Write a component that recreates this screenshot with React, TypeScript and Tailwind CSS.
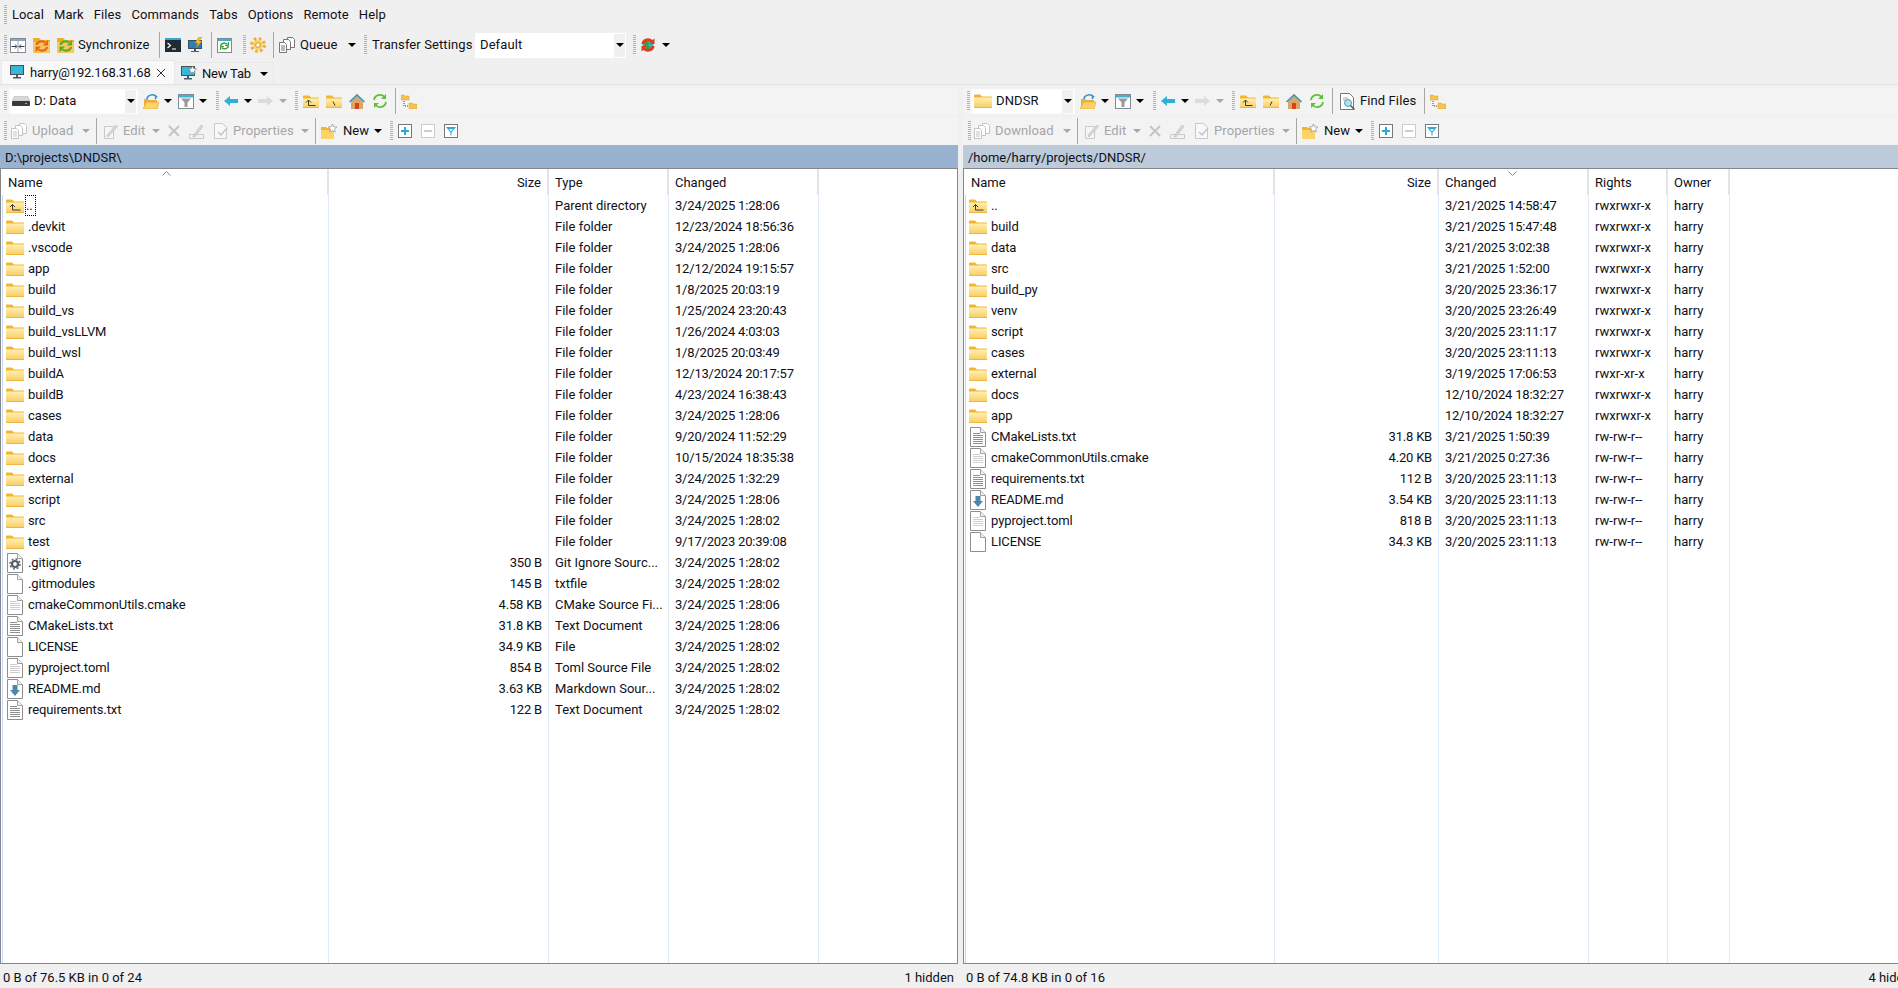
import type { ReactNode } from "react";

const text = "text-[#101018]";

function Grip({ className = "" }: { className?: string }) {
  return (
    <span
      className={`block w-[3px] h-[20px] shrink-0 bg-[repeating-linear-gradient(to_bottom,#b2b2b2_0_1px,transparent_1px_2px)] ${className}`}
    />
  );
}

function Sep({ className = "" }: { className?: string }) {
  return <span className={`block w-px h-[26px] shrink-0 bg-[#a6a6a6] ${className}`} />;
}

function Caret({ className = "", off = false }: { className?: string; off?: boolean }) {
  return (
    <span
      className={`block w-0 h-0 shrink-0 border-x-[4px] border-x-transparent border-t-[4px] ${
        off ? "border-t-[#a8a8a8]" : "border-t-black"
      } ${className}`}
    />
  );
}

function Label({ className = "", off = false, tight = false, children }: { className?: string; off?: boolean; tight?: boolean; children: ReactNode }) {
  return (
    <span
      className={`block shrink-0 whitespace-nowrap ${tight ? "tracking-[-0.2px]" : "tracking-[0.1px]"} ${
        off ? "text-[#a6a6a6]" : text
      } ${className}`}
    >
      {children}
    </span>
  );
}

function Ico({ w = 16, h = 16, className = "", children }: { w?: number; h?: number; className?: string; children: ReactNode }) {
  return (
    <svg width={w} height={h} viewBox={`0 0 ${w} ${h}`} className={`block shrink-0 ${className}`}>
      {children}
    </svg>
  );
}

function FolderShape({ w = 18, h = 14 }: { w?: number; h?: number }) {
  return (
    <>
      <defs>
        <linearGradient id="fbody" x1="0" y1="0" x2="0" y2="1">
          <stop offset="0" stopColor="#fff0b4" />
          <stop offset="1" stopColor="#f9cc5f" />
        </linearGradient>
      </defs>
      <path d={`M0 1.5a1 1 0 0 1 1-1h5l2 2h${w - 9}a1 1 0 0 1 1 1V${h}H0z`} fill="#f3b52f" />
      <rect x="0" y="3.5" width={w} height={h - 3.5} fill="url(#fbody)" />
      <rect x="0" y={h - 1} width={w} height="1" fill="#eeb540" />
    </>
  );
}

function Folder({ className = "" }: { className?: string }) {
  return (
    <Ico w={18} h={14} className={className}>
      <FolderShape />
    </Ico>
  );
}

function UpFolder({ className = "" }: { className?: string }) {
  return (
    <Ico w={16} h={13} className={className}>
      <FolderShape w={16} h={13} />
      <path d="M3 7.500l2.500-2.500 2.500 2.500M5.500 5v5.500h7" fill="none" stroke="#3c3c28" strokeWidth="1" />
    </Ico>
  );
}

function RootFolder({ className = "", slash }: { className?: string; slash: string }) {
  return (
    <Ico w={16} h={13} className={className}>
      <FolderShape w={16} h={13} />
      <path d={slash} fill="none" stroke="#3c3c28" strokeWidth="1" />
    </Ico>
  );
}

function Doc({ lines = 0, light = false, h = 20 }: { lines?: number; light?: boolean; h?: number }) {
  const ys = Array.from({ length: lines }, (_, i) => 6.5 + i * 2);
  return (
    <Ico w={16} h={h}>
      <path d={`M.5.5h10l5 5v${h - 6}H.5z`} fill="#fff" stroke="#8e8e8e" />
      <path d="M10.5.5v5h5" fill="#f1f1f1" stroke="#a0a0a0" />
      {ys.map((y, i) => (
        <path key={y} d={`M3 ${y}h${i === 0 ? 7 : 10}`} stroke={light ? "#cfcfcf" : "#8f8f8f"} strokeWidth="1" />
      ))}
    </Ico>
  );
}

function GearDoc() {
  return (
    <Ico w={16} h={20}>
      <path d="M.5.5h10l5 5v14H.5z" fill="#fff" stroke="#8e8e8e" />
      <path d="M10.5.5v5h5" fill="#f1f1f1" stroke="#a0a0a0" />
      <circle cx="8" cy="11" r="3" fill="none" stroke="#56606a" strokeWidth="2.2" />
      <circle cx="8" cy="11" r="5" fill="none" stroke="#56606a" strokeWidth="1.4" strokeDasharray="2 1.9" />
    </Ico>
  );
}

function MdDoc() {
  return (
    <Ico w={16} h={20}>
      <path d="M.5.5h10l5 5v14H.5z" fill="#fff" stroke="#8e8e8e" />
      <path d="M10.5.5v5h5" fill="#f1f1f1" stroke="#a0a0a0" />
      <path d="M5.500 6h5v5H13l-5 6-5-6h2.500z" fill="#4f87ab" />
    </Ico>
  );
}

type Kind = "up" | "folder" | "text" | "light" | "plain" | "gear" | "md";

function RowIcon({ kind }: { kind: Kind }) {
  if (kind === "up")
    return (
      <Ico w={18} h={14}>
        <FolderShape />
        <path d="M4 8l2.500-2.500L9 8M6.500 5.500V11h8" fill="none" stroke="#3c3c28" strokeWidth="1" />
      </Ico>
    );
  if (kind === "folder") return <Folder />;
  if (kind === "text") return <Doc lines={6} />;
  if (kind === "light") return <Doc lines={5} light />;
  if (kind === "gear") return <GearDoc />;
  if (kind === "md") return <MdDoc />;
  return <Doc />;
}

function SyncFolder({ tone, className = "" }: { tone: string; className?: string }) {
  return (
    <Ico w={17} h={16} className={className}>
      <path d="M0 1.500h6l2 2h9V16H0z" fill="#f8c95a" />
      <path d="M0 1h6l2 2h9v2H0z" fill="#eeac2c" />
      <path d="M3.500 8a5 4 0 0 1 8.500-2.500" fill="none" stroke={tone} strokeWidth="2.200" />
      <path d="M15 3v5.500H9.500z" fill={tone} />
      <path d="M14 10a5 4 0 0 1-8.500 2.500" fill="none" stroke={tone} strokeWidth="2.200" />
      <path d="M2.500 15.500V9.500h5.500z" fill={tone} />
    </Ico>
  );
}

function CompareIcon({ className = "" }: { className?: string }) {
  return (
    <Ico w={16} h={15} className={className}>
      <rect x=".5" y=".5" width="15" height="14" fill="#fff" stroke="#7f8b96" />
      <rect x="1" y="1" width="14" height="2" fill="#8fa5b8" />
      <path d="M8 3v11" stroke="#9aa5ae" />
      <path d="M1.500 8.500h5M5 6.500l2 2-2 2M14.500 8.500h-5M11 6.500l-2 2 2 2" stroke="#303c48" strokeWidth="1" fill="none" />
    </Ico>
  );
}

function TerminalIcon({ className = "" }: { className?: string }) {
  return (
    <Ico w={16} h={14} className={className}>
      <rect width="16" height="14" fill="#1f2a33" />
      <rect width="16" height="2" fill="#33a6d6" />
      <path d="M2.500 5l3 2.500-3 2.500" stroke="#fff" strokeWidth="1.200" fill="none" />
      <path d="M7 11h4" stroke="#fff" />
    </Ico>
  );
}

function MonitorBolt({ className = "" }: { className?: string }) {
  return (
    <Ico w={16} h={16} className={className}>
      <rect x=".5" y="3.500" width="13" height="8" fill="#2d7fb5" stroke="#3b4d5c" />
      <path d="M6 12h2v2h3v1H3v-1h3z" fill="#4a5a66" />
      <path d="M11 0l-4 6h3l-2 5 6-7h-3l3-4z" fill="#f4c430" stroke="#b98b10" strokeWidth=".5" />
    </Ico>
  );
}

function RefreshWindow({ className = "" }: { className?: string }) {
  return (
    <Ico w={15} h={15} className={className}>
      <rect x=".5" y=".5" width="14" height="14" fill="#fff" stroke="#7f8b96" />
      <rect x="1" y="1" width="13" height="2" fill="#3fb1c9" />
      <path d="M3.500 8a4 3.500 0 0 1 7-1.500M11.500 8a4 3.500 0 0 1-7 1.500" fill="none" stroke="#3b9d35" strokeWidth="1.500" />
      <path d="M11.500 4v3.500H8M3.500 12V8.500H7" fill="none" stroke="#3b9d35" strokeWidth="1" />
    </Ico>
  );
}

function Gear({ className = "" }: { className?: string }) {
  return (
    <Ico w={16} h={16} className={className}>
      <circle cx="8" cy="8" r="6.200" fill="none" stroke="#eeb02f" strokeWidth="3.400" strokeDasharray="2.600 2.270" />
      <circle cx="8" cy="8" r="5" fill="#fbd469" />
      <circle cx="8" cy="8" r="2.400" fill="#f4f4f4" stroke="#d9951f" />
    </Ico>
  );
}

function Stack({ off = false, className = "" }: { off?: boolean; className?: string }) {
  const s = off ? "#c4c4c4" : "#777";
  return (
    <Ico w={16} h={16} className={className}>
      <path d="M8.500.5h5l2 2v8h-7z" fill="#fff" stroke={s} />
      <path d="M4.500 2.500h5l2 2v8h-7z" fill="#fff" stroke={s} />
      <path d="M.5 5.500h5l2 2v8h-7z" fill="#fff" stroke={s} />
      <path d="M2 9h4M2 11h4M2 13h4" stroke={s} />
    </Ico>
  );
}

function GlobeSync({ className = "" }: { className?: string }) {
  return (
    <Ico w={16} h={16} className={className}>
      <circle cx="8" cy="8" r="5.500" fill="#39b3c6" />
      <path d="M5 4l4 1-1 3 2 2-2 3-2-3-2-1z" fill="#3f9b3c" />
      <path d="M1.500 7a6.500 6 0 0 1 11-4l2-1.500V7H9l2-1.800a4 4 0 0 0-6.500 1.800z" fill="#d9401a" />
      <path d="M14.500 9a6.500 6 0 0 1-11 4l-2 1.500V9H7L5 10.800a4 4 0 0 0 6.500-1.800z" fill="#d9401a" />
    </Ico>
  );
}

function MonitorIcon({ star = false, className = "" }: { star?: boolean; className?: string }) {
  return (
    <Ico w={16} h={15} className={className}>
      <rect x=".5" y=".5" width="13" height="9" fill="#38b6d8" stroke="#45525c" />
      <path d="M6 10h2v2h3v1.500H3V12h3z" fill="#4a5a66" />
      {star && <path d="M11.500 0l1.200 2.600 2.800.3-2 1.900.5 2.800-2.500-1.400L9 7.600l.5-2.800-2-1.900 2.800-.3z" fill="#fff" stroke="#7a7a7a" strokeWidth=".7" />}
    </Ico>
  );
}

function DriveIcon() {
  return (
    <Ico w={18} h={10}>
      <path d="M2.500 0h13L18 5H0z" fill="#d8d8d8" stroke="#b0b0b0" strokeWidth=".5" />
      <rect x="0" y="5" width="18" height="5" rx="1" fill="#3a3a3a" />
      <rect x="13" y="7" width="2" height="1" fill="#8fd14f" />
    </Ico>
  );
}

function OpenFolder({ className = "" }: { className?: string }) {
  return (
    <Ico w={16} h={15} className={className}>
      <path d="M1 5h4l1 1h8v8H1z" fill="#eeb03a" />
      <path d="M3.500 8H16l-2 7H0z" fill="#fbd36a" stroke="#e5a52d" strokeWidth=".6" />
      <path d="M4 5a5 4 0 0 1 9-2.500M11 1l2.500 1.500L12 5" fill="none" stroke="#2c8fd0" strokeWidth="1.500" />
    </Ico>
  );
}

function FilterIcon({ className = "" }: { className?: string }) {
  return (
    <Ico w={16} h={15} className={className}>
      <rect x=".5" y=".5" width="15" height="14" fill="#fff" stroke="#7f8b96" />
      <rect x="1" y="1" width="14" height="2.500" fill="#3fb1d6" />
      <path d="M3 4.500h10L9.500 8.500V13h-3V8.500z" fill="#9a9a9a" />
    </Ico>
  );
}

function BackArrow({ className = "" }: { className?: string }) {
  return (
    <Ico w={14} h={10} className={className}>
      <path d="M0 5l6-5v3h8v4H6v3z" fill="#2fb0d8" />
    </Ico>
  );
}

function ForwardArrow({ className = "" }: { className?: string }) {
  return (
    <Ico w={15} h={10} className={className}>
      <path d="M15 5L9 0v3H0v4h9v3z" fill="#dcdcdc" />
    </Ico>
  );
}

function Home({ className = "" }: { className?: string }) {
  return (
    <Ico w={16} h={15} className={className}>
      <path d="M8 0L0 7.500h2V15h12V7.500h2z" fill="#d9a869" />
      <path d="M8 0L0 7.500l1 1L8 2l7 6.500 1-1z" fill="#2f9cd0" />
      <rect x="6" y="9" width="4" height="6" fill="#d9421b" />
    </Ico>
  );
}

function RefreshIcon({ className = "" }: { className?: string }) {
  return (
    <Ico w={16} h={16} className={className}>
      <path d="M2 7a6 6 0 0 1 10.500-3M14 9a6 6 0 0 1-10.500 3" fill="none" stroke="#5fc13a" strokeWidth="1.800" />
      <path d="M14 1v5H9zM2 15v-5h5z" fill="#5fc13a" />
    </Ico>
  );
}

function TreeIcon({ className = "" }: { className?: string }) {
  return (
    <Ico w={16} h={15} className={className}>
      <path d="M0 1h3l1 1h4v4H0zM8 9h3l1 1h4v5H8z" fill="#f5c44f" stroke="#dca32b" strokeWidth=".5" />
      <path d="M3 7v5h4" stroke="#444" strokeDasharray="1 1" fill="none" />
    </Ico>
  );
}

function FindIcon({ className = "" }: { className?: string }) {
  return (
    <Ico w={16} h={17} className={className}>
      <path d="M.5.5h9l4 4v12H.5z" fill="#fff" stroke="#777" />
      <path d="M3 5h5M3 7h4" stroke="#aaa" />
      <circle cx="8" cy="10" r="3.500" fill="#aee0ee" stroke="#5a9db5" />
      <path d="M10.500 12.500l4 4" stroke="#555" strokeWidth="1.500" />
    </Ico>
  );
}

function EditIcon({ className = "" }: { className?: string }) {
  return (
    <Ico w={14} h={15} className={className}>
      <path d="M.5 2.500h9v12h-9z" fill="#f6f6f6" stroke="#c9c9c9" />
      <path d="M3 11l9-10 1.500 1.500-9 10H3z" fill="#d6d6d6" stroke="#bdbdbd" strokeWidth=".6" />
    </Ico>
  );
}

function RenameIcon({ className = "" }: { className?: string }) {
  return (
    <Ico w={15} h={15} className={className}>
      <path d="M.5 10.500h14v4H.5z" fill="none" stroke="#c9c9c9" />
      <path d="M4 12l8-11 2 1.500-8 10.500H4z" fill="#d6d6d6" stroke="#bdbdbd" strokeWidth=".6" />
    </Ico>
  );
}

function PropsIcon({ className = "" }: { className?: string }) {
  return (
    <Ico w={14} h={16} className={className}>
      <path d="M.5.5h8l4 4v11H.5z" fill="#f8f8f8" stroke="#c9c9c9" />
      <path d="M4 9l3 3 6-7" fill="none" stroke="#c4c4c4" strokeWidth="1.400" />
    </Ico>
  );
}

function NewFolder({ className = "" }: { className?: string }) {
  return (
    <Ico w={16} h={15} className={className}>
      <path d="M0 3h5l1 1h7v11H0z" fill="#f3b52f" />
      <rect x="0" y="6" width="13" height="9" fill="#fbd36a" />
      <path d="M11.500 0l1.300 2.800 3 .3-2.200 2 .6 3-2.700-1.500L8.800 8l.6-3-2.200-2 3-.3z" fill="#fff" stroke="#8a8a8a" strokeWidth=".7" />
    </Ico>
  );
}

function BoxIcon({ kind, className = "" }: { kind: "plus" | "minus" | "filter"; className?: string }) {
  const on = kind !== "minus";
  return (
    <Ico w={14} h={14} className={className}>
      <rect x=".5" y=".5" width="13" height="13" fill="#fff" stroke={on ? "#6f7a84" : "#cccccc"} />
      {kind === "plus" && <path d="M7 3v8M3 7h8" stroke="#2aa9d6" strokeWidth="2" />}
      {kind === "minus" && <path d="M3 7h8" stroke="#cccccc" strokeWidth="2" />}
      {kind === "filter" && (
        <>
          <path d="M2 3h10L7.500 8.500v3h-1v-3z" fill="#2aa9d6" />
          <path d="M5 5h4L7 7.500z" fill="#fff" />
        </>
      )}
    </Ico>
  );
}

function Combo({ width, icon, label, barClass }: { width: string; icon?: ReactNode; label: string; barClass: string }) {
  return (
    <div className={`flex items-center h-[25px] bg-white shrink-0 border border-[#fafafa] ${width} ${barClass}`}>
      {icon}
      <Label className="ml-[4px]">{label}</Label>
      <span className="ml-auto mr-px flex items-center justify-center w-[11px] h-[23px] bg-[#f0f0f0]">
        <Caret />
      </span>
    </div>
  );
}

function NavBar({ combo, slash, children }: { combo: ReactNode; slash: string; children?: ReactNode }) {
  return (
    <div className="flex items-center h-[28px] mt-[2px] bg-[#f3f3f3]">
      <Grip className="ml-[4px]" />
      {combo}
      <OpenFolder className="ml-[5px]" />
      <Caret className="ml-[5px]" />
      <FilterIcon className="ml-[6px]" />
      <Caret className="ml-[5px]" />
      <Grip className="ml-[9px]" />
      <BackArrow className="ml-[5px]" />
      <Caret className="ml-[6px]" />
      <ForwardArrow className="ml-[6px]" />
      <Caret off className="ml-[6px]" />
      <Grip className="ml-[8px]" />
      <UpFolder className="ml-[5px]" />
      <RootFolder className="ml-[7px]" slash={slash} />
      <Home className="ml-[7px]" />
      <RefreshIcon className="ml-[7px]" />
      <Sep className="ml-[7px]" />
      {children}
      <TreeIcon className="ml-[5px]" />
    </div>
  );
}

function ActionBar({ label, labelWidth, gripClass, iconClass }: { label: string; labelWidth: string; gripClass: string; iconClass: string }) {
  return (
    <div className="flex items-center h-[28px] mt-[2px] bg-[#f3f3f3]">
      <Grip className={gripClass} />
      <Stack off className={iconClass} />
      <Label off className={`ml-[5px] ${labelWidth}`}>{label}</Label>
      <Caret off className="ml-[7px]" />
      <Sep className="ml-[6px]" />
      <EditIcon className="ml-[7px]" />
      <Label off className="ml-[5px] w-[23px]">Edit</Label>
      <Caret off className="ml-[6px]" />
      <svg width="12" height="12" viewBox="0 0 12 12" className="block shrink-0 ml-[8px]">
        <path d="M1 1l10 10M11 1L1 11" stroke="#c4c4c4" strokeWidth="2" />
      </svg>
      <RenameIcon className="ml-[9px]" />
      <PropsIcon className="ml-[10px]" />
      <Label off className="ml-[5px] w-[62px]">Properties</Label>
      <Caret off className="ml-[6px]" />
      <Sep className="ml-[6px]" />
      <NewFolder className="ml-[5px]" />
      <Label className="ml-[6px] w-[27px]">New</Label>
      <Caret className="ml-[4px]" />
      <Grip className="ml-[8px]" />
      <BoxIcon kind="plus" className="ml-[5px]" />
      <BoxIcon kind="minus" className="ml-[9px]" />
      <BoxIcon kind="filter" className="ml-[9px]" />
    </div>
  );
}

type Row = { kind: Kind; name: string; size?: string; type?: string; changed: string; rights?: string };

const folderType = "File folder";

const leftRows: Row[] = [
  { kind: "up", name: "..", type: "Parent directory", changed: "3/24/2025 1:28:06" },
  { kind: "folder", name: ".devkit", type: folderType, changed: "12/23/2024 18:56:36" },
  { kind: "folder", name: ".vscode", type: folderType, changed: "3/24/2025 1:28:06" },
  { kind: "folder", name: "app", type: folderType, changed: "12/12/2024 19:15:57" },
  { kind: "folder", name: "build", type: folderType, changed: "1/8/2025 20:03:19" },
  { kind: "folder", name: "build_vs", type: folderType, changed: "1/25/2024 23:20:43" },
  { kind: "folder", name: "build_vsLLVM", type: folderType, changed: "1/26/2024 4:03:03" },
  { kind: "folder", name: "build_wsl", type: folderType, changed: "1/8/2025 20:03:49" },
  { kind: "folder", name: "buildA", type: folderType, changed: "12/13/2024 20:17:57" },
  { kind: "folder", name: "buildB", type: folderType, changed: "4/23/2024 16:38:43" },
  { kind: "folder", name: "cases", type: folderType, changed: "3/24/2025 1:28:06" },
  { kind: "folder", name: "data", type: folderType, changed: "9/20/2024 11:52:29" },
  { kind: "folder", name: "docs", type: folderType, changed: "10/15/2024 18:35:38" },
  { kind: "folder", name: "external", type: folderType, changed: "3/24/2025 1:32:29" },
  { kind: "folder", name: "script", type: folderType, changed: "3/24/2025 1:28:06" },
  { kind: "folder", name: "src", type: folderType, changed: "3/24/2025 1:28:02" },
  { kind: "folder", name: "test", type: folderType, changed: "9/17/2023 20:39:08" },
  { kind: "gear", name: ".gitignore", size: "350 B", type: "Git Ignore Sourc...", changed: "3/24/2025 1:28:02" },
  { kind: "plain", name: ".gitmodules", size: "145 B", type: "txtfile", changed: "3/24/2025 1:28:02" },
  { kind: "light", name: "cmakeCommonUtils.cmake", size: "4.58 KB", type: "CMake Source Fi...", changed: "3/24/2025 1:28:06" },
  { kind: "text", name: "CMakeLists.txt", size: "31.8 KB", type: "Text Document", changed: "3/24/2025 1:28:06" },
  { kind: "plain", name: "LICENSE", size: "34.9 KB", type: "File", changed: "3/24/2025 1:28:02" },
  { kind: "light", name: "pyproject.toml", size: "854 B", type: "Toml Source File", changed: "3/24/2025 1:28:02" },
  { kind: "md", name: "README.md", size: "3.63 KB", type: "Markdown Sour...", changed: "3/24/2025 1:28:02" },
  { kind: "text", name: "requirements.txt", size: "122 B", type: "Text Document", changed: "3/24/2025 1:28:02" },
];

const rwxr = "rwxrwxr-x";
const rwf = "rw-rw-r--";

const rightRows: Row[] = [
  { kind: "up", name: "..", changed: "3/21/2025 14:58:47", rights: rwxr },
  { kind: "folder", name: "build", changed: "3/21/2025 15:47:48", rights: rwxr },
  { kind: "folder", name: "data", changed: "3/21/2025 3:02:38", rights: rwxr },
  { kind: "folder", name: "src", changed: "3/21/2025 1:52:00", rights: rwxr },
  { kind: "folder", name: "build_py", changed: "3/20/2025 23:36:17", rights: rwxr },
  { kind: "folder", name: "venv", changed: "3/20/2025 23:26:49", rights: rwxr },
  { kind: "folder", name: "script", changed: "3/20/2025 23:11:17", rights: rwxr },
  { kind: "folder", name: "cases", changed: "3/20/2025 23:11:13", rights: rwxr },
  { kind: "folder", name: "external", changed: "3/19/2025 17:06:53", rights: "rwxr-xr-x" },
  { kind: "folder", name: "docs", changed: "12/10/2024 18:32:27", rights: rwxr },
  { kind: "folder", name: "app", changed: "12/10/2024 18:32:27", rights: rwxr },
  { kind: "text", name: "CMakeLists.txt", size: "31.8 KB", changed: "3/21/2025 1:50:39", rights: rwf },
  { kind: "light", name: "cmakeCommonUtils.cmake", size: "4.20 KB", changed: "3/21/2025 0:27:36", rights: rwf },
  { kind: "text", name: "requirements.txt", size: "112 B", changed: "3/20/2025 23:11:13", rights: rwf },
  { kind: "md", name: "README.md", size: "3.54 KB", changed: "3/20/2025 23:11:13", rights: rwf },
  { kind: "light", name: "pyproject.toml", size: "818 B", changed: "3/20/2025 23:11:13", rights: rwf },
  { kind: "plain", name: "LICENSE", size: "34.3 KB", changed: "3/20/2025 23:11:13", rights: rwf },
];

const tightCol = "tracking-[-0.2px]";
const nameCol = "tracking-[-0.1px]";

function Column({
  width,
  title,
  right = false,
  first = false,
  sort,
  bodyClass = "",
  children,
}: {
  width: string;
  title: string;
  right?: boolean;
  first?: boolean;
  sort?: ReactNode;
  bodyClass?: string;
  children: ReactNode;
}) {
  return (
    <div className={`relative flex flex-col shrink-0 h-full ${width}`}>
      {sort}
      <div className={`flex items-center h-[26px] pt-[2px] shrink-0 border-r-2 border-[#e4e4e4] px-[6px] ${right ? "justify-end" : ""} ${text}`}>
        {title}
      </div>
      <div className={`flex-1 border-r border-[#dfeafb] ${first ? "border-l border-l-[#c6d8f2]" : ""} ${bodyClass}`}>{children}</div>
    </div>
  );
}

function Cell({ right = false, children }: { right?: boolean; children?: ReactNode }) {
  return (
    <div className={`flex items-center h-[21px] whitespace-nowrap px-[6px] ${right ? "justify-end" : ""} ${text}`}>
      {children}
    </div>
  );
}

function NameCell({ row, focused = false }: { row: Row; focused?: boolean }) {
  return (
    <div className={`flex items-center h-[21px] whitespace-nowrap ${text}`}>
      <span className="flex items-center justify-center w-[18px] ml-[3px] shrink-0">
        <RowIcon kind={row.kind} />
      </span>
      {focused ? (
        <span className="ml-[2px] h-[19px] w-[9px] leading-[19px] outline-1 outline-dotted outline-black">..</span>
      ) : (
        <span className="ml-[4px]">{row.name}</span>
      )}
    </div>
  );
}

function SortMark({ d, className }: { d: string; className: string }) {
  return (
    <svg width="9" height="5" viewBox="0 0 9 5" className={`absolute top-[2px] ${className}`}>
      <path d={d} fill="none" stroke="#8a8a8a" />
    </svg>
  );
}

export default function App() {
  return (
    <div className={`w-[1898px] h-[988px] overflow-hidden flex flex-col bg-[#f0f0f0] font-['Roboto',sans-serif] text-[13px] ${text}`}>
      <div className="flex items-center h-[30px] shrink-0">
        <Grip className="ml-[4px]" />
        <div className="flex gap-[10px] ml-[5px] tracking-[0.1px]">
          {["Local", "Mark", "Files", "Commands", "Tabs", "Options", "Remote", "Help"].map((m) => (
            <span key={m}>{m}</span>
          ))}
        </div>
      </div>

      <div className="flex items-center h-[30px] shrink-0">
        <Grip className="ml-[4px]" />
        <CompareIcon className="ml-[3px]" />
        <SyncFolder className="ml-[7px]" tone="#e8641f" />
        <SyncFolder className="ml-[7px]" tone="#55ad2f" />
        <Label className="ml-[4px] w-[73px]">Synchronize</Label>
        <Sep className="ml-[8px]" />
        <TerminalIcon className="ml-[5px]" />
        <MonitorBolt className="ml-[7px]" />
        <Sep className="ml-[7px]" />
        <RefreshWindow className="ml-[5px]" />
        <Grip className="ml-[11px]" />
        <Gear className="ml-[4px]" />
        <Sep className="ml-[7px]" />
        <Stack className="ml-[5px]" />
        <Label className="ml-[5px] w-[41px]">Queue</Label>
        <Caret className="ml-[7px]" />
        <Grip className="ml-[8px]" />
        <Label className="ml-[5px] w-[101px]">Transfer Settings</Label>
        <div className="flex items-center h-[25px] w-[151px] ml-[2px] bg-white shrink-0">
          <Label className="ml-[5px]">Default</Label>
          <span className="ml-auto mr-px flex items-center justify-center w-[11px] h-[23px] bg-[#f0f0f0]">
            <Caret />
          </span>
        </div>
        <Grip className="ml-[7px]" />
        <GlobeSync className="ml-[4px]" />
        <Caret className="ml-[6px]" />
      </div>

      <div className="flex items-end h-[25px] shrink-0 border-b border-[#e2e2e2]">
        <div className="flex items-center h-[24px] w-[174px] ml-px bg-[#f9f9f9] border-x border-t border-[#e8e8e8]">
          <MonitorIcon className="ml-[8px]" />
          <Label tight className="ml-[4px] w-[123px]">harry@192.168.31.68</Label>
          <svg width="10" height="10" viewBox="0 0 10 10" className="block shrink-0 ml-[3px]">
            <path d="M1 1l8 8M9 1L1 9" stroke="#333" strokeWidth="1" />
          </svg>
        </div>
        <div className="flex items-center h-[22px] w-[99px] border-r border-t border-[#e8e8e8]">
          <MonitorIcon star className="ml-[6px]" />
          <Label tight className="ml-[5px] w-[50px]">New Tab</Label>
          <Caret className="ml-[8px]" />
        </div>
      </div>

      <div className="flex flex-1 min-h-0">
        <section className="flex flex-col w-[958px] shrink-0">
          <NavBar
            slash="M7 6.500l2 4"
            combo={<Combo width="w-[129px]" barClass="ml-[2px]" icon={<span className="ml-[2px]"><DriveIcon /></span>} label="D: Data" />}
          />
          <ActionBar label="Upload" labelWidth="w-[43px]" gripClass="ml-[4px]" iconClass="ml-[4px]" />
          <div className="flex items-center h-[23px] pt-[2px] shrink-0 bg-[#98b2d0] px-[5px]">D:\projects\DNDSR\</div>
          <div className="flex flex-1 min-h-0 bg-white border border-[#85858c] pl-px">
            <Column width="w-[327px]" title="Name" first bodyClass={nameCol} sort={<SortMark d="M.5 4.500l4-4 4 4" className="left-[160px]" />}>
              {leftRows.map((r, i) => (
                <NameCell key={r.name} row={r} focused={i === 0} />
              ))}
            </Column>
            <Column width="w-[220px]" title="Size" right bodyClass={tightCol}>
              {leftRows.map((r) => (
                <Cell key={r.name} right>{r.size}</Cell>
              ))}
            </Column>
            <Column width="w-[120px]" title="Type">
              {leftRows.map((r) => (
                <Cell key={r.name}>{r.type}</Cell>
              ))}
            </Column>
            <Column width="w-[150px]" title="Changed" bodyClass={tightCol}>
              {leftRows.map((r) => (
                <Cell key={r.name}>{r.changed}</Cell>
              ))}
            </Column>
          </div>
        </section>

        <section className="flex flex-col flex-1 min-w-0 ml-[5px]">
          <NavBar
            slash="M9 6.500l-2 4"
            combo={<Combo width="w-[104px]" barClass="ml-px" icon={<span className="ml-[2px]"><Folder /></span>} label="DNDSR" />}
          >
            <FindIcon className="ml-[7px]" />
            <Label className="ml-[4px] w-[56px]">Find Files</Label>
            <Sep className="ml-[8px]" />
          </NavBar>
          <ActionBar label="Download" labelWidth="w-[61px]" gripClass="ml-[5px]" iconClass="ml-[3px]" />
          <div className="flex items-center h-[23px] pt-[2px] shrink-0 bg-[#bccad9] px-[5px]">/home/harry/projects/DNDSR/</div>
          <div className="flex flex-1 min-h-0 bg-white border-y border-l border-[#85858c] pl-px">
            <Column width="w-[310px]" title="Name" first bodyClass={nameCol}>
              {rightRows.map((r) => (
                <NameCell key={r.name} row={r} />
              ))}
            </Column>
            <Column width="w-[164px]" title="Size" right bodyClass={tightCol}>
              {rightRows.map((r) => (
                <Cell key={r.name} right>{r.size}</Cell>
              ))}
            </Column>
            <Column width="w-[150px]" title="Changed" bodyClass={tightCol} sort={<SortMark d="M.5.5l4 4 4-4" className="left-[69px]" />}>
              {rightRows.map((r) => (
                <Cell key={r.name}>{r.changed}</Cell>
              ))}
            </Column>
            <Column width="w-[79px]" title="Rights">
              {rightRows.map((r) => (
                <Cell key={r.name}>{r.rights}</Cell>
              ))}
            </Column>
            <Column width="w-[62px]" title="Owner">
              {rightRows.map((r) => (
                <Cell key={r.name}>harry</Cell>
              ))}
            </Column>
          </div>
        </section>
      </div>

      <div className="flex items-center h-[24px] pt-[3px] shrink-0">
        <div className="flex justify-between w-[958px] shrink-0 pl-[3px] pr-[4px]">
          <span>0 B of 76.5 KB in 0 of 24</span>
          <span>1 hidden</span>
        </div>
        <div className="flex flex-1 min-w-0 ml-[8px] whitespace-nowrap">
          <span>0 B of 74.8 KB in 0 of 16</span>
          <span className="ml-auto -mr-[20px]">4 hidden</span>
        </div>
      </div>
    </div>
  );
}
